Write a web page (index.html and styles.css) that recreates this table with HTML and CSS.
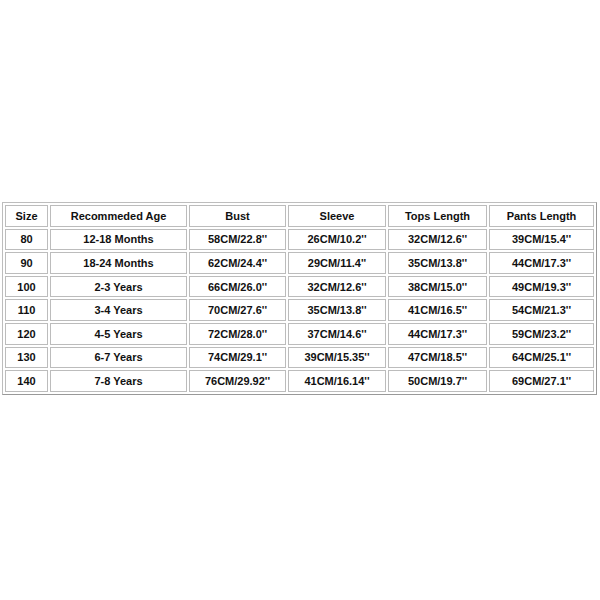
FILE: index.html
```html
<!DOCTYPE html>
<html>
<head>
<meta charset="utf-8">
<link rel="stylesheet" href="styles.css">
</head>
<body>
<div class="page">
<table class="size-table">
<colgroup>
<col class="c-size"><col class="c-age"><col class="c-bust"><col class="c-sleeve"><col class="c-tops"><col class="c-pants">
</colgroup>
<tr><td>Size</td><td>Recommeded Age</td><td>Bust</td><td>Sleeve</td><td>Tops Length</td><td>Pants Length</td></tr>
<tr><td>80</td><td>12-18 Months</td><td>58CM/22.8''</td><td>26CM/10.2''</td><td>32CM/12.6''</td><td>39CM/15.4''</td></tr>
<tr><td>90</td><td>18-24 Months</td><td>62CM/24.4''</td><td>29CM/11.4''</td><td>35CM/13.8''</td><td>44CM/17.3''</td></tr>
<tr><td>100</td><td>2-3 Years</td><td>66CM/26.0''</td><td>32CM/12.6''</td><td>38CM/15.0''</td><td>49CM/19.3''</td></tr>
<tr><td>110</td><td>3-4 Years</td><td>70CM/27.6''</td><td>35CM/13.8''</td><td>41CM/16.5''</td><td>54CM/21.3''</td></tr>
<tr><td>120</td><td>4-5 Years</td><td>72CM/28.0''</td><td>37CM/14.6''</td><td>44CM/17.3''</td><td>59CM/23.2''</td></tr>
<tr><td>130</td><td>6-7 Years</td><td>74CM/29.1''</td><td>39CM/15.35''</td><td>47CM/18.5''</td><td>64CM/25.1''</td></tr>
<tr><td>140</td><td>7-8 Years</td><td>76CM/29.92''</td><td>41CM/16.14''</td><td>50CM/19.7''</td><td>69CM/27.1''</td></tr>
</table>
</div>
</body>
</html>
```
FILE: styles.css
```css
html, body {
  margin: 0;
  padding: 0;
  background: #ffffff;
}
.page {
  width: 600px;
  height: 600px;
  padding-top: 202px;
  padding-left: 2px;
  box-sizing: border-box;
}
.size-table {
  width: 595px;
  table-layout: fixed;
  border-collapse: separate;
  border-spacing: 2px;
  border: 1px solid #bdbdbd;
  border-right-color: #999999;
  border-bottom-color: #999999;
  font-family: "Liberation Sans", Arial, sans-serif;
  font-weight: bold;
  font-size: 11px;
  color: #111111;
}
.size-table td {
  border: 1px solid #bcbcbc;
  height: 19.6px;
  padding: 0;
  text-align: center;
  vertical-align: middle;
  white-space: nowrap;
}
.c-size { width: 43px; }
.c-age { width: 137px; }
.c-bust { width: 97px; }
.c-sleeve { width: 98px; }
.c-tops { width: 99px; }
.c-pants { width: 105px; }
```
